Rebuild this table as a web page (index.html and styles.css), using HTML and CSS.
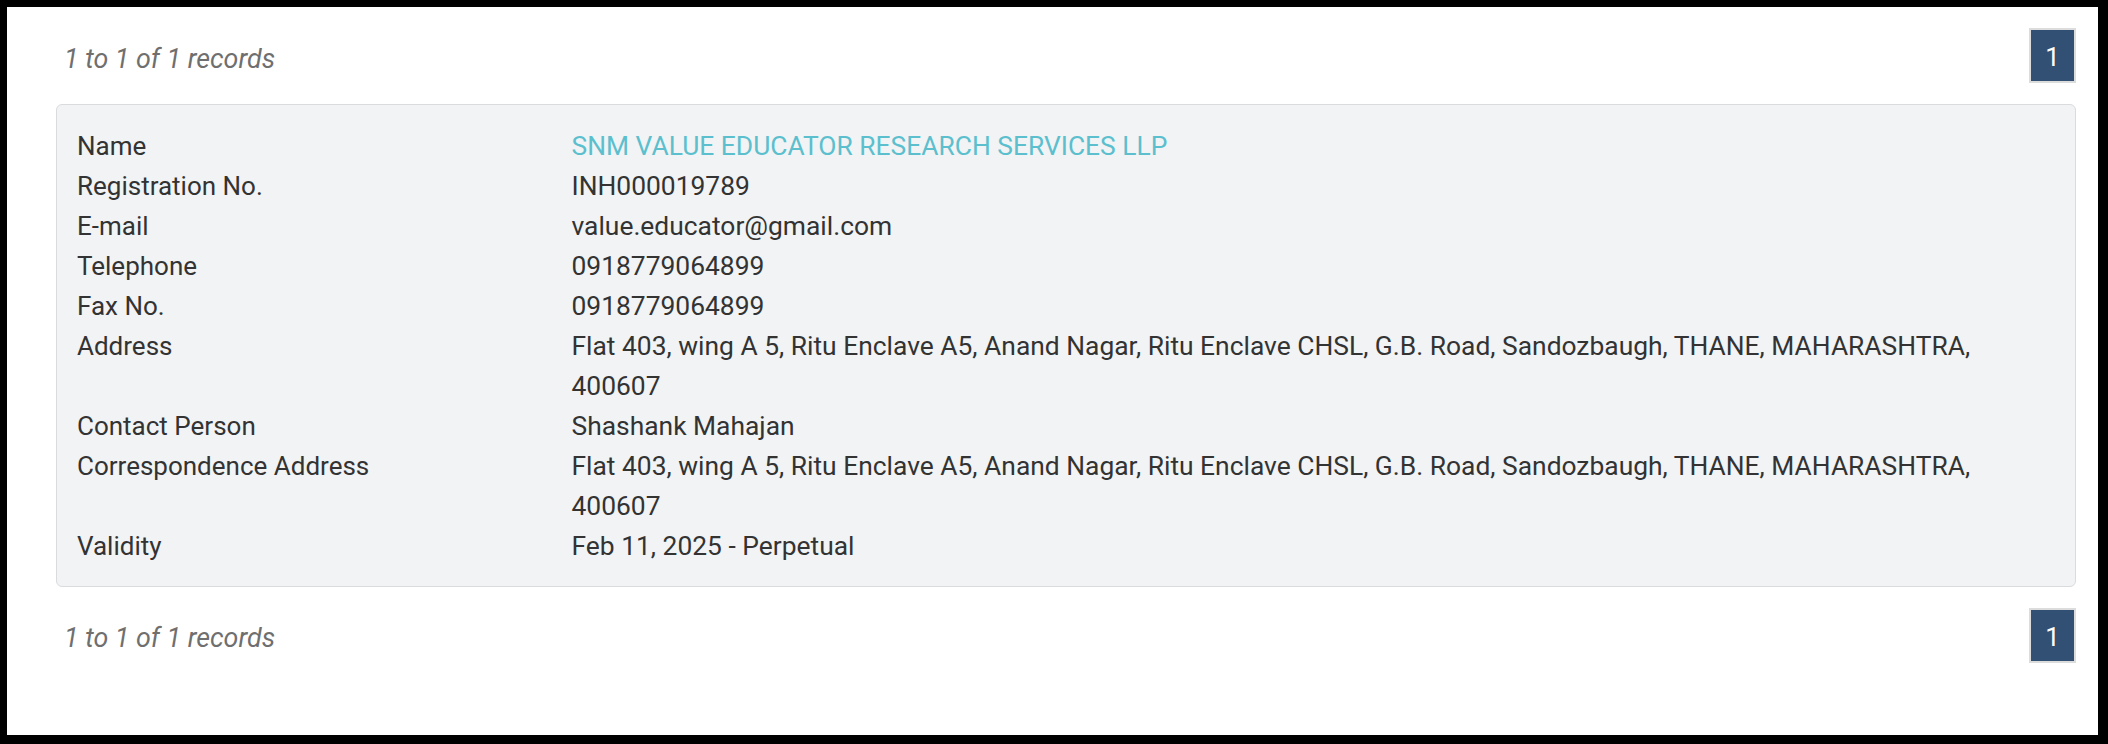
FILE: index.html
```html
<!DOCTYPE html>
<html lang="en">
<head>
<meta charset="utf-8">
<title>Records</title>
<link rel="stylesheet" href="styles.css">
</head>
<body>
<div class="frame">
  <div class="bar">
    <div class="count">1 to 1 of 1 records</div>
    <ul class="pager"><li class="page active">1</li></ul>
  </div>
  <div class="card">
    <dl class="details">
      <dt>Name</dt><dd class="name">SNM VALUE EDUCATOR RESEARCH SERVICES LLP</dd>
      <dt>Registration No.</dt><dd>INH000019789</dd>
      <dt>E-mail</dt><dd>value.educator@gmail.com</dd>
      <dt>Telephone</dt><dd>0918779064899</dd>
      <dt>Fax No.</dt><dd>0918779064899</dd>
      <dt>Address</dt><dd>Flat 403, wing A 5, Ritu Enclave A5, Anand Nagar, Ritu Enclave CHSL, G.B. Road, Sandozbaugh, THANE, MAHARASHTRA, 400607</dd>
      <dt>Contact Person</dt><dd>Shashank Mahajan</dd>
      <dt>Correspondence Address</dt><dd>Flat 403, wing A 5, Ritu Enclave A5, Anand Nagar, Ritu Enclave CHSL, G.B. Road, Sandozbaugh, THANE, MAHARASHTRA, 400607</dd>
      <dt>Validity</dt><dd>Feb 11, 2025 - Perpetual</dd>
    </dl>
  </div>
  <div class="bar bar-bottom">
    <div class="count">1 to 1 of 1 records</div>
    <ul class="pager"><li class="page active">1</li></ul>
  </div>
</div>
</body>
</html>
```
FILE: styles.css
```css
html, body {
  margin: 0;
  padding: 0;
  background: #000;
}
body {
  width: 2108px;
  height: 744px;
  overflow: hidden;
  font-family: Roboto, "Liberation Sans", Arial, sans-serif;
  color: #333;
}
.frame {
  box-sizing: border-box;
  margin: 7px 10px 0 7px;
  height: 728px;
  background: #fff;
  padding: 21px 22px 0 49px;
  display: flex;
  flex-direction: column;
  gap: 21px;
}
.bar {
  display: flex;
  justify-content: space-between;
  align-items: flex-start;
}
.count {
  margin-top: 11px;
  padding-left: 8px;
  font-size: 26.8px;
  line-height: 40px;
  font-style: italic;
  color: #6f6f6f;
}
.bar-bottom .count {
  margin-top: 10px;
}
.pager {
  list-style: none;
  margin: 0;
  padding: 0;
  display: flex;
}
.page {
  box-sizing: border-box;
  width: 47px;
  height: 55px;
  border: 2px solid #dcdcdc;
  background: #315073;
  color: #fff;
  font-size: 26px;
  line-height: 55px;
  text-align: center;
  padding-bottom: 2px;
}
.card {
  background: #f2f3f5;
  border: 1px solid #dadbdd;
  border-radius: 6px;
  padding: 21px 20px 20px;
}
.details {
  margin: 0;
  display: grid;
  grid-template-columns: 25% 75%;
  font-size: 26px;
  line-height: 40px;
  color: #333;
}
.details dt, .details dd {
  margin: 0;
}
.details dd {
  font-size: 26.4px;
}
.details dd.name {
  color: #5bbfce;
}
```
